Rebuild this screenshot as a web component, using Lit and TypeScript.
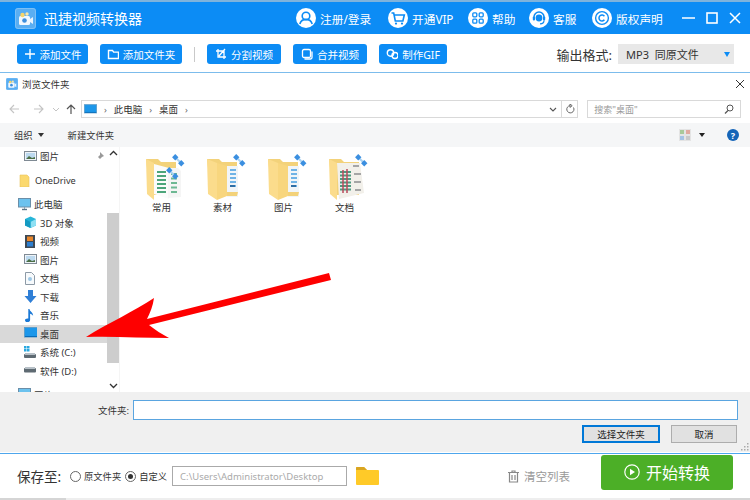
import { LitElement, html, css, svg } from "lit";
import { customElement } from "lit/decorators.js";

const W = (s: unknown, w = 20, h = 20, box = "0 0 20 20") =>
  html`<svg width=${w} height=${h} viewBox=${box} style="flex:none;display:block">${s}</svg>`;

const ICONS = {
  user: svg`<circle cx="10" cy="10" r="10" fill="#fff"/><circle cx="10" cy="8" r="3.8" fill="none" stroke="#0c8cf5" stroke-width="1.6"/><path d="M3.8 16c1-3.4 3.4-4.6 6.2-4.6s5.200 1.200 6.200 4.600" fill="none" stroke="#0c8cf5" stroke-width="1.6"/>`,
  cart: svg`<circle cx="10" cy="10" r="10" fill="#fff"/><path d="M3.500 5h2.200l1.600 8h7.600l1.400-6H6" fill="none" stroke="#0c8cf5" stroke-width="1.6"/><circle cx="8" cy="15.6" r="1.1" fill="#0c8cf5"/><circle cx="14" cy="15.6" r="1.1" fill="#0c8cf5"/>`,
  grid: svg`<circle cx="10" cy="10" r="10" fill="#fff"/><g fill="none" stroke="#0c8cf5" stroke-width="1.3"><rect x="4.8" y="4.8" width="4" height="4" rx="1"/><rect x="11.2" y="4.8" width="4" height="4" rx="1"/><rect x="4.8" y="11.2" width="4" height="4" rx="1"/><rect x="11.2" y="11.2" width="4" height="4" rx="1"/></g>`,
  head: svg`<circle cx="10" cy="10" r="10" fill="#fff"/><path d="M5 11V9a5 5 0 0 1 10 0v2" fill="none" stroke="#0c8cf5" stroke-width="1.5"/><circle cx="10" cy="10" r="3.4" fill="#0c8cf5"/><rect x="3.8" y="8.6" width="2.2" height="4" rx="1" fill="#0c8cf5"/><rect x="14" y="8.6" width="2.2" height="4" rx="1" fill="#0c8cf5"/><path d="M15 12.500c0 2.400-2 3.300-4 3.300" fill="none" stroke="#0c8cf5" stroke-width="1.2"/>`,
  copy: svg`<circle cx="10" cy="10" r="10" fill="#fff"/><circle cx="10" cy="10" r="6.4" fill="none" stroke="#0c8cf5" stroke-width="1.4"/><path d="M12.400 8.200a3 3 0 1 0 0 3.600" fill="none" stroke="#0c8cf5" stroke-width="1.5"/>`,
  logo: svg`<rect width="21" height="21" rx="3" fill="#5aaef2"/><rect x=".5" y=".5" width="20" height="20" rx="2.500" fill="none" stroke="#7cc0f6"/><rect x="4" y="8" width="11" height="9" rx="1.500" fill="#f2f8fe"/><path d="M15 11l3-2v7l-3-2z" fill="#eaf4fd"/><circle cx="7.500" cy="7" r="2.200" fill="#f7d56a"/><circle cx="12" cy="6" r="1.700" fill="#fbe7a6"/><circle cx="9.500" cy="12.500" r="2.300" fill="#3f8fdc"/>`,
  plus: svg`<path d="M6 1v10M1 6h10" stroke="#fff" stroke-width="1.4"/>`,
  folderLine: svg`<path d="M1.500 2.500h4l1.200 1.600h4.800v6.400h-10z" fill="none" stroke="#fff" stroke-width="1.4"/>`,
  crop: svg`<path d="M3 1v8h8M1 3h8v8M10 1L4 8" fill="none" stroke="#fff" stroke-width="1.3"/>`,
  merge: svg`<path d="M3.500 11h6a1.500 1.500 0 0 0 1.500-1.500V3.500" fill="none" stroke="#fff" stroke-width="1.300"/><rect x="1.500" y="1.500" width="8" height="8" rx="1.500" fill="none" stroke="#fff" stroke-width="1.3"/>`,
  gif: svg`<circle cx="4.500" cy="5" r="3.200" fill="none" stroke="#fff" stroke-width="1.4"/><circle cx="9" cy="7.500" r="3" fill="none" stroke="#fff" stroke-width="1.4"/>`,
  monitor: svg`<rect x=".5" y=".5" width="14" height="9.500" fill="#1c97ea" stroke="#5d9dc9"/><path d="M1 9.500h13" stroke="#0a6cb8"/>`,
  pic: svg`<rect x=".5" y="1.500" width="12" height="9" fill="#eef3f8" stroke="#7f8a94"/><rect x="2" y="3" width="9" height="6" fill="#bcd9ef"/><path d="M2 9l3-3 3 2 3-1v2z" fill="#4b6f45"/>`,
  od: svg`<path d="M1 1h7l2 2v10H1z" fill="#fbd96f" stroke="#e9c35a" stroke-width=".6"/>`,
  pc: svg`<rect x=".5" y=".5" width="12" height="8.500" fill="#6cc2ee" stroke="#6b8ea8"/><path d="M4 11.500h5" stroke="#5d7587" stroke-width="1.4"/><path d="M6.500 9v2" stroke="#8aa0b0"/>`,
  cube: svg`<path d="M6.500 .5L12 3v6.500L6.500 12 1 9.500V3z" fill="#27b5d8"/><path d="M6.500 6L12 3v6.500L6.500 12z" fill="#8ee0f3"/><path d="M1 3l5.500 3v6L1 9.500z" fill="#149ac2"/>`,
  film: svg`<rect x="1" y="0" width="10" height="13" fill="#3e4954"/><rect x="3" y="1.500" width="6" height="4.500" fill="#e8862b"/><rect x="3" y="7" width="6" height="4.500" fill="#2d7fd0"/>`,
  doc: svg`<path d="M1.500 .5h6l3 3v9h-9z" fill="#f7fafc" stroke="#8d9aa6"/><circle cx="6" cy="7" r="2" fill="#9cc7e5"/>`,
  down: svg`<path d="M4 0h5v6h3.500L6.500 13 .5 6H4z" fill="#2f7fd6"/>`,
  music: svg`<path d="M5.500 0c.3 2.600 3.800 3.400 3.600 7-.6-1.400-2-2-3-2.200V11c0 1.400-1.400 2.200-2.800 2.200S1 12.500 1 11.300 2.300 9.300 4.300 9.600V0z" fill="#1b79d6"/>`,
  win: svg`<rect x="0" y="8" width="12" height="4" rx="1" fill="#5e6a72"/><rect x="1" y="7" width="10" height="2" fill="#b7c0c7"/><rect x="0" y="0" width="2.500" height="2.500" fill="#29a8e0"/><rect x="3" y="0" width="2.500" height="2.500" fill="#29a8e0"/><rect x="0" y="3" width="2.500" height="2.500" fill="#29a8e0"/><rect x="3" y="3" width="2.500" height="2.500" fill="#29a8e0"/>`,
  drive: svg`<rect x="0" y="4" width="12" height="4.500" rx="1" fill="#5e6a72"/><rect x="1" y="3" width="10" height="2" fill="#b7c0c7"/>`,
};

const chain = (x: number, y: number) => svg`<g transform="translate(${x} ${y})"><path d="M2.500 2.500l6 6" stroke="#a9d2f3" stroke-width="2"/><rect x="0" y="0" width="4.500" height="4.500" fill="#3b8fe0" transform="rotate(45 2.250 2.250)"/><rect x="6" y="6" width="4.500" height="4.500" fill="#3b8fe0" transform="rotate(45 8.250 8.250)"/></g>`;

function folderIcon(kind: string) {
  const back = svg`<path d="M1 5h12l3 3h15v33H5z" fill="#f3d27a"/>`;
  const rows = (x: number, w: number, n: number, y0: number, step: number, c: string) =>
    Array.from({ length: n }, (_, i) => svg`<rect x=${x} y=${y0 + i * step} width=${w} height="2" fill=${c}/>`);
  if (kind === "a") {
    return html`<svg width="40" height="46" viewBox="0 0 40 46" style="display:block;margin-left:6px">
      ${back}
      <path d="M9 10l15 4v31L9 40z" fill="#fbfbfb"/>
      <path d="M23 14h10l3 3v26l-13 1z" fill="#f5f5f5"/>
      ${rows(12, 9, 6, 17, 4, "#4ca57a")}
      ${rows(26, 6, 5, 19, 4.500, "#6db893")}
      <path d="M1 5l8 4v37L2 40z" fill="#fbdc8c"/>
      ${chain(28, 1)}${chain(22, 14)}
    </svg>`;
  }
  if (kind === "d") {
    return html`<svg width="40" height="46" viewBox="0 0 40 46" style="display:block;margin-left:6px">
      ${back}
      <path d="M9 9h23l4 30-25 6z" fill="#f2f0ea"/>
      ${rows(12, 11, 6, 17, 3.500, "#4f9a80")}
      <path d="M15 16v23M19 15v24" stroke="#b94a5c" stroke-width="1.500"/>
      <path d="M25 12h6M26 20h7M26 28h7M27 36h6" stroke="#a5a5a5" stroke-width="2"/>
      <path d="M1 5l8 4v37L2 40z" fill="#fbdc8c"/>
      ${chain(28, 1)}
    </svg>`;
  }
  return html`<svg width="40" height="46" viewBox="0 0 40 46" style="display:block;margin-left:6px">
    ${back}
    <path d="M21 12h11v31H21z" fill="#f1f5f8"/>
    ${rows(24, 6, 5, 15, 4, "#6fb3e6")}
    <rect x="24" y="31" width="5" height="2" fill="#2e6ea5"/>
    <path d="M1 5l10 4v37L2 40z" fill="#fbdc8c"/>
    <path d="M11 9l10 3v30l-10 4z" fill="#f8d67e"/>
    <path d="M21 38h11l-1 4H21z" fill="#f3d27a"/>
    ${chain(28, 1)}
  </svg>`;
}

@customElement("app-root")
export class AppRoot extends LitElement {
  static styles = css`
    :host { display: block; width: 750px; height: 500px; position: relative; overflow: hidden; background: #fff;
      font-family: "Noto Sans", "Noto Sans CJK SC", sans-serif; color: #333; }
    * { box-sizing: border-box; }
    .titlebar { height: 34px; border-top: 2px solid #7fb3dc; background: #0c8cf5; color: #fff; display: flex; align-items: center; padding-left: 15px; }
    .apptitle { font-size: 14px; margin-left: 8px; }
    .nav { margin-left: auto; display: flex; align-items: center; }
    .nav-item { display: flex; align-items: center; gap: 4px; font-size: 11.700px; width: 92px; }
    .nav-item.short { width: 61px; }
    .nav-item.c { width: 63px; }
    .nav-item.l { width: 80px; }
    .nav-item.v { width: 90px; }
    .winbtns { display: flex; align-items: center; gap: 11px; padding-right: 9px; }
    .toolbar { height: 38px; display: flex; align-items: center; padding: 2px 16px 0 17px; }
    .tb { height: 20px; background: #0c8cf5; border-radius: 3px; color: #fff; font-size: 10.500px; display: flex; align-items: center; justify-content: center; gap: 4px; margin-right: 12px; white-space: nowrap; }
    .w71 { width: 71px; } .w82 { width: 82px; } .w74 { width: 74px; } .w68 { width: 68px; margin-right: 0; }
    .sep { width: 1px; height: 15px; background: #c9c9c9; margin: 0 12px 0 0; }
    .fmt-label { margin-left: auto; font-size: 13px; color: #333; }
    .fmt { width: 116px; height: 20px; background: #e8e8e8; margin-left: 6px; display: flex; align-items: center; font-size: 11px; padding: 0 4px 0 8px; color: #333; white-space: pre; }
    .fmt i { margin-left: auto; width: 0; height: 0; border: 3px solid transparent; border-top: 5px solid #0c8cf5; border-bottom: 0; }
    .dialog { height: 382px; border-top: 1px solid #7cbcec; border-bottom: 1px solid #4ea6ec; display: flex; flex-direction: column; }
    .dlgtitle { height: 22px; display: flex; align-items: center; padding: 0 5px 0 6px; font-size: 9.500px; gap: 4px; color: #333; flex: none; }
    .dlgtitle svg:last-child { margin-left: auto; }
    .addr { height: 18px; margin-top: 5px; display: flex; align-items: center; padding: 0 9px 0 9px; flex: none; }
    .nav-arrows { width: 72px; display: flex; align-items: center; color: #bbb; }
    .nb { margin-left: 13px; }
    .nc { margin-left: 8px; }
    .nd { margin-left: 6px; }
    .box { height: 18px; border: 1px solid #d9d9d9; display: flex; align-items: center; font-size: 9.500px; color: #333; }
    .path { width: 482px; padding-left: 2px; gap: 7px; }
    .path svg:last-child { margin-left: auto; margin-right: 4px; }
    .chev { color: #666; font-size: 9px; }
    .refresh { width: 16px; border-left: 0; justify-content: center; }
    .search { width: 154px; margin-left: 9px; padding: 0 6px; color: #999; justify-content: space-between; font-size: 9px; }
    .cmd { height: 24px; margin-top: 5px; background: #f5f6f7; display: flex; align-items: center; padding: 0 11px 0 14px; font-size: 9.300px; flex: none; color: #333; }
    .tri { width: 0; height: 0; border: 3.500px solid transparent; border-top: 4px solid #333; border-bottom: 0; margin-left: 5px; }
    .tri.view { margin-left: 8px; border-top-color: #222; }
    .newf { margin-left: 24px; }
    .cmdright { margin-left: auto; display: flex; align-items: center; }
    .help { width: 12px; height: 12px; border-radius: 50%; background: #1565b8; color: #fff; font-size: 9px; font-weight: 700; display: flex; align-items: center; justify-content: center; margin-left: 22px; }
    .body { height: 245px; display: flex; flex: none; overflow: hidden; }
    .side { width: 107px; flex: none; font-size: 9.500px; color: #333; overflow: hidden; }
    .row { height: 18.500px; display: flex; align-items: center; gap: 3px; padding-left: 24px; white-space: nowrap; }
    .row.top { padding-left: 19px; margin-top: 5.500px; font-size: 9.200px; }
    .row.top.pc { padding-left: 18px; font-size: 9.500px; }
    .row.sel { background: #d9d9d9; }
    .row svg.pin { margin-left: auto; margin-right: 3px; }
    .bar { width: 12px; flex: none; display: flex; flex-direction: column; align-items: center; justify-content: space-between; padding: 3px 0; }
    .thumb { width: 12px; height: 150px; background: #cdcdcd; margin-top: 50px; margin-bottom: 13px; }
    .files { flex: 1; display: flex; padding: 7px 0 0 11px; align-items: flex-start; background: #fff; border-left: 1px solid #f5f5f5; }
    .f { width: 61px; display: flex; flex-direction: column; align-items: center; font-size: 9.500px; color: #333; }
    .foot { height: 60px; background: #f0f0f0; position: relative; flex: none; padding: 8px 12px 0 0; display: flex; flex-direction: column; align-items: stretch; }
    .nameline { display: flex; align-items: center; justify-content: flex-end; font-size: 9.500px; color: #333; }
    .nameinput { width: 605px; height: 20px; border: 1px solid #5aa5e0; background: #fff; margin-left: 4px; }
    .btns { display: flex; justify-content: flex-end; gap: 11px; margin-top: 5px; padding-right: 1px; }
    .dbtn { height: 18px; background: #e1e1e1; border: 1px solid #adadad; font-size: 9.500px; color: #222; display: flex; align-items: center; justify-content: center; width: 66px; }
    .dbtn.def { width: 78px; border: 2px solid #0078d7; }
    .grip { position: absolute; right: 1px; bottom: 1px; }
    .bottom { height: 44px; display: flex; align-items: center; padding: 0 17px; font-size: 12px; color: #333; }
    .save { font-size: 13.500px; width: 53px; white-space: nowrap; }
    .radio { width: 11px; height: 11px; border: 1px solid #666; border-radius: 50%; background: #fff; flex: none; display: flex; align-items: center; justify-content: center; }
    .radio b { width: 5px; height: 5px; border-radius: 50%; background: #333; display: block; }
    .rl { margin: 0 4px 0 3px; font-size: 9.300px; white-space: nowrap; }
    .savepath { width: 175px; height: 20px; border: 1px solid #aaa; font-size: 9.500px; color: #aaa; display: flex; align-items: center; padding-left: 7px; margin-left: 1px; white-space: nowrap; }
    .yf { margin-left: 9px; }
    .clear { margin-left: auto; display: flex; align-items: center; gap: 5px; color: #999; font-size: 11.500px; }
    .start { width: 132px; height: 35px; background: #4caf27; border-radius: 3px; color: #fff; font-size: 16px; display: flex; align-items: center; justify-content: center; gap: 6px; margin-left: 31px; margin-top: -8px; }
    .strip { height: 2px; background: linear-gradient(90deg, #d5d5d5 0 66px, #eee 66px 670px, #d5d5d5 670px); }
    .arrow { position: absolute; left: 0; top: 0; pointer-events: none; }
  `;

  private side = [
    ["图片", ICONS.pic, "", true],
    ["OneDrive", ICONS.od, "top"],
    ["此电脑", ICONS.pc, "top pc"],
    ["3D 对象", ICONS.cube, ""],
    ["视频", ICONS.film, ""],
    ["图片", ICONS.pic, ""],
    ["文档", ICONS.doc, ""],
    ["下载", ICONS.down, ""],
    ["音乐", ICONS.music, ""],
    ["桌面", ICONS.monitor, "sel"],
    ["系统 (C:)", ICONS.win, ""],
    ["软件 (D:)", ICONS.drive, ""],
    ["网络", ICONS.pc, "top pc"],
  ] as [string, unknown, string, boolean?][];

  render() {
    const box = "0 0 13 13";
    return html`
      <div class="titlebar">
        ${W(ICONS.logo, 21, 21, "0 0 21 21")}
        <span class="apptitle">迅捷视频转换器</span>
        <div class="nav">
          <div class="nav-item">${W(ICONS.user)}注册/登录</div>
          <div class="nav-item l">${W(ICONS.cart)}开通VIP</div>
          <div class="nav-item short">${W(ICONS.grid)}帮助</div>
          <div class="nav-item c">${W(ICONS.head)}客服</div>
          <div class="nav-item v">${W(ICONS.copy)}版权声明</div>
          <div class="winbtns">
            ${W(svg`<path d="M0 7h13" stroke="#fff" stroke-width="1.500"/>`, 13, 14, "0 0 13 14")}
            ${W(svg`<rect x="1" y="2" width="10" height="10" fill="none" stroke="#fff" stroke-width="1.600"/>`, 12, 14, "0 0 12 14")}
            ${W(svg`<path d="M1 2l10 10M11 2L1 12" stroke="#fff" stroke-width="1.500"/>`, 12, 14, "0 0 12 14")}
          </div>
        </div>
      </div>
      <div class="toolbar">
        <div class="tb w71">${W(ICONS.plus, 12, 12, "0 0 12 12")}添加文件</div>
        <div class="tb w82">${W(ICONS.folderLine, 12, 12, "0 0 12 12")}添加文件夹</div>
        <div class="sep"></div>
        <div class="tb w74">${W(ICONS.crop, 12, 12, "0 0 12 12")}分割视频</div>
        <div class="tb w74">${W(ICONS.merge, 12, 12, "0 0 12 12")}合并视频</div>
        <div class="tb w68">${W(ICONS.gif, 12, 12, "0 0 12 12")}制作GIF</div>
        <span class="fmt-label">输出格式:</span>
        <div class="fmt">MP3  同原文件<i></i></div>
      </div>
      <div class="dialog">
        <div class="dlgtitle">
          ${W(ICONS.logo, 12, 12, "0 0 21 21")}<span>浏览文件夹</span>
          ${W(svg`<path d="M1 1l8 8M9 1L1 9" stroke="#333" stroke-width="1"/>`, 10, 10, "0 0 10 10")}
        </div>
        <div class="addr">
          <div class="nav-arrows">
            ${W(svg`<path d="M1 5h9M5 1L1 5l4 4" fill="none" stroke="#c4c4c4" stroke-width="1.100"/>`, 11, 10, "0 0 11 10")}
            <span class="nb">${W(svg`<path d="M1 5h9M6 1l4 4-4 4" fill="none" stroke="#c4c4c4" stroke-width="1.100"/>`, 11, 10, "0 0 11 10")}</span>
            <span class="nc">${W(svg`<path d="M1 1l3 3 3-3" fill="none" stroke="#c4c4c4"/>`, 8, 5, "0 0 8 5")}</span>
            <span class="nd">${W(svg`<path d="M5 10V1M1 5l4-4 4 4" fill="none" stroke="#555" stroke-width="1.200"/>`, 10, 11, "0 0 10 11")}</span>
          </div>
          <div class="box path">
            ${W(ICONS.monitor, 13, 10, "0 0 15 11")}
            <span class="chev">›</span><span>此电脑</span>
            <span class="chev">›</span><span>桌面</span>
            <span class="chev">›</span>
            ${W(svg`<path d="M1 1l3 3 3-3" fill="none" stroke="#555" stroke-width="1.100"/>`, 8, 5, "0 0 8 5")}
          </div>
          <div class="box refresh">
            ${W(svg`<path d="M8.500 3.500A3.600 3.600 0 1 1 5 1.700M5 0v3.400L7.200 1.700z" fill="none" stroke="#666"/>`, 10, 10, "0 0 10 10")}
          </div>
          <div class="box search">
            <span>搜索"桌面"</span>
            ${W(svg`<circle cx="6" cy="4" r="3" fill="none" stroke="#555"/><path d="M4 6.500L1 9.500" stroke="#555" stroke-width="1.200"/>`, 10, 10, "0 0 10 10")}
          </div>
        </div>
        <div class="cmd">
          <span>组织</span><i class="tri"></i>
          <span class="newf">新建文件夹</span>
          <div class="cmdright">
            ${W(svg`<rect width="12" height="12" fill="#e4e4e4"/><rect x="1" y="1" width="4" height="4" fill="#a9c99a"/><rect x="7" y="1" width="4" height="4" fill="#e0a99e"/><rect x="1" y="7" width="4" height="4" fill="#a5c3e4"/><rect x="7" y="7" width="4" height="4" fill="#c9c9c9"/>`, 12, 12, "0 0 12 12")}
            <i class="tri view"></i>
            <div class="help">?</div>
          </div>
        </div>
        <div class="body">
          <div class="side">
            ${this.side.map(
              ([t, ic, cls, pin]) => html`<div class="row ${cls}">
                ${W(ic, 13, 13, box)}<span>${t}</span>
                ${pin
                  ? html`<svg class="pin" width="9" height="9" viewBox="0 0 9 9"><path d="M5 0l4 4-2 1-2 2-1-1-3 3 3-3-1-1 2-2z" fill="#999"/></svg>`
                  : ""}
              </div>`,
            )}
          </div>
          <div class="bar">
            ${W(svg`<path d="M1 5l3.500-3.500L8 5" fill="none" stroke="#333" stroke-width="1.300"/>`, 9, 6, "0 0 9 6")}
            <div class="thumb"></div>
            ${W(svg`<path d="M1 1l3.500 3.500L8 1" fill="none" stroke="#333" stroke-width="1.300"/>`, 9, 6, "0 0 9 6")}
          </div>
          <div class="files">
            ${[["常用", "a"], ["素材", "b"], ["图片", "c"], ["文档", "d"]].map(
              ([t, k]) => html`<div class="f">${folderIcon(k)}<span>${t}</span></div>`,
            )}
          </div>
        </div>
        <div class="foot">
          <div class="nameline"><span>文件夹:</span><div class="nameinput"></div></div>
          <div class="btns"><div class="dbtn def">选择文件夹</div><div class="dbtn">取消</div></div>
          <svg class="grip" width="8" height="8" viewBox="0 0 8 8"><g fill="#aaa"><rect x="6" y="0" width="1.500" height="1.500"/><rect x="3" y="3" width="1.500" height="1.500"/><rect x="6" y="3" width="1.500" height="1.500"/><rect x="0" y="6" width="1.500" height="1.500"/><rect x="3" y="6" width="1.500" height="1.500"/><rect x="6" y="6" width="1.500" height="1.500"/></g></svg>
        </div>
      </div>
      <div class="bottom">
        <span class="save">保存至:</span>
        <span class="radio"></span><span class="rl">原文件夹</span>
        <span class="radio"><b></b></span><span class="rl">自定义</span>
        <div class="savepath">C:\\Users\\Administrator\\Desktop</div>
        <span class="yf">${W(svg`<path d="M0 1a1 1 0 0 1 1-1h7l3 3h11a1 1 0 0 1 1 1v13a1 1 0 0 1-1 1H1a1 1 0 0 1-1-1z" fill="#ffca28"/><path d="M0 3V1a1 1 0 0 1 1-1h7l3 3z" fill="#d9a521"/>`, 23, 18, "0 0 23 18")}</span>
        <div class="clear">
          ${W(svg`<path d="M0 2.500h11M4 2.500V1h3v1.500M1.500 2.500V12h8V2.500M4 5v5M7 5v5" fill="none" stroke="#888" stroke-width="1.200"/>`, 11, 13, "0 0 11 13")}
          清空列表
        </div>
        <div class="start">
          ${W(svg`<circle cx="8" cy="8" r="7.200" fill="none" stroke="#fff" stroke-width="1.200"/><path d="M6 4.800v6.400L11 8z" fill="#fff"/>`, 16, 16, "0 0 16 16")}
          开始转换
        </div>
      </div>
      <div class="strip"></div>
      <svg class="arrow" width="750" height="500" viewBox="0 0 750 500">
        <path d="M86 337C108 323 135 311 154 298C153 306 150 313 147 319L329 273L331 280L149 325C155 330 162 334 169 338C142 338 112 336 86 337Z" fill="#fe0000"/>
      </svg>
    `;
  }
}
